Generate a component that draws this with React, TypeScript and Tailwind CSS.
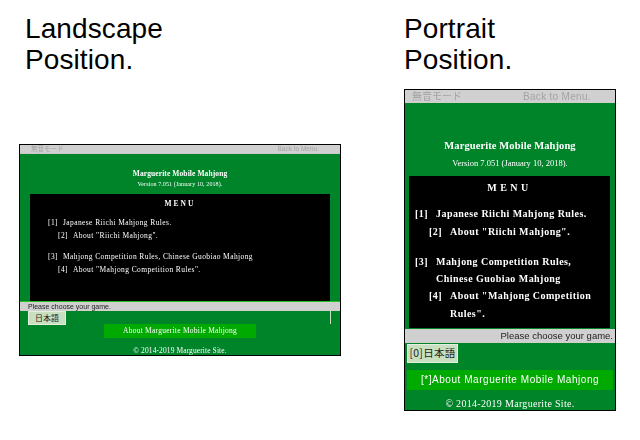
const serif = { fontFamily: '"Liberation Serif", "Noto Sans CJK JP", serif' }

function Heading({ first }: { first: string }) {
  return (
    <h2 className="text-[28px] leading-[31px] font-normal tracking-[0.1px] text-black font-['Liberation_Sans',sans-serif]">
      {first}
      <br />
      Position.
    </h2>
  )
}

function Landscape() {
  return (
    <div
      style={serif}
      className="mt-[69px] flex h-[212px] w-[322px] flex-col overflow-hidden border border-black bg-[#00842a] text-white"
    >
      <div className="flex h-[9px] items-center justify-between border-b border-dotted border-[#c9b9d9] bg-[#d0d0d0] pl-[11px] pr-[21px] text-[6.5px] leading-none text-[#a3a3a3] font-['Liberation_Sans','Noto_Sans_CJK_JP',sans-serif]">
        <span className="blur-[0.3px]">無音モード</span>
        <span className="blur-[0.3px]">Back to Menu.</span>
      </div>
      <p className="mt-[15px] text-center text-[7.5px] leading-[10px] font-bold tracking-[0.1px] blur-[0.3px]">Marguerite Mobile Mahjong</p>
      <p className="mt-px text-center text-[6px] leading-[8px] tracking-[0.1px] blur-[0.3px]">Version 7.051 (January 10, 2018).</p>
      <div className="mx-[10px] mt-[6px] h-[108px] bg-black pt-[3px] text-[7.5px] leading-[13px] tracking-[0.4px]">
        <p className="text-center font-bold tracking-[2px] blur-[0.3px]">MENU</p>
        <div className="mt-[6px] pl-[18px] blur-[0.3px]">
          <p className="flex"><span className="w-[15px]">[1]</span>Japanese Riichi Mahjong Rules.</p>
          <p className="flex pl-[10px]"><span className="w-[15px]">[2]</span>About "Riichi Mahjong".</p>
          <p className="mt-[8px] flex"><span className="w-[15px]">[3]</span>Mahjong Competition Rules, Chinese Guobiao Mahjong</p>
          <p className="flex pl-[10px]"><span className="w-[15px]">[4]</span>About "Mahjong Competition Rules".</p>
        </div>
      </div>
      <div className="h-px bg-[#22c322]" />
      <div className="flex h-[9px] items-center bg-[#d0d0d0] pl-[8px] text-[7px] leading-none text-[#222] font-['Liberation_Sans',sans-serif]">
        <span className="blur-[0.3px]">Please choose your game.</span>
      </div>
      <div className="flex h-[13px] items-start justify-between pl-[8px] pr-[9px]">
        <span className="flex h-[14px] w-[38px] items-center justify-center border border-[#e4efe0] bg-[#c8dfc0] text-[8px] leading-none text-[#222] font-['Noto_Sans_CJK_JP',sans-serif]">日本語</span>
        <span className="h-[13px] w-px bg-[#c8dfc0]" />
      </div>
      <div className="mx-[84px] flex h-[14px] items-center justify-center bg-[#00aa00] text-[7.5px] leading-none tracking-[0.25px]">
        <span className="blur-[0.3px]">About Marguerite Mobile Mahjong</span>
      </div>
      <p className="mt-[9px] text-center text-[7.5px] leading-[8px] tracking-[0.1px] blur-[0.3px]">© 2014-2019 Marguerite Site.</p>
    </div>
  )
}

function Portrait() {
  return (
    <div
      style={serif}
      className="mt-[14px] flex h-[322px] w-[212px] flex-col overflow-hidden border border-black bg-[#00842a] text-white"
    >
      <div className="flex h-[13px] items-center bg-[#d0d0d0] pl-[7px] text-[10px] leading-none text-[#a3a3a3] font-['Liberation_Sans','Noto_Sans_CJK_JP',sans-serif]">
        <span className="w-[111px] blur-[0.2px]">無音モード</span>
        <span className="tracking-[0.3px] blur-[0.2px]">Back to Menu.</span>
      </div>
      <p className="mt-[37px] text-center text-[10.5px] leading-[12px] font-bold tracking-[0.1px] blur-[0.2px]">Marguerite Mobile Mahjong</p>
      <p className="mt-[5px] text-center text-[8.5px] leading-[12px] blur-[0.2px]">Version 7.051 (January 10, 2018).</p>
      <div className="ml-[4px] mr-[5px] mt-[7px] h-[152px] bg-black pt-[3px] text-[10px] leading-[17.3px] font-bold tracking-[0.45px]">
        <p className="text-center tracking-[3.5px] blur-[0.2px]">MENU</p>
        <div className="mt-[9px] pl-[6px] blur-[0.2px]">
          <p className="flex"><span className="w-[21px] shrink-0">[1]</span>Japanese Riichi Mahjong Rules.</p>
          <p className="flex pl-[14px]"><span className="w-[21px] shrink-0">[2]</span>About "Riichi Mahjong".</p>
          <p className="mt-[13px] flex"><span className="w-[21px] shrink-0">[3]</span><span>Mahjong Competition Rules,<br />Chinese Guobiao Mahjong</span></p>
          <p className="flex pl-[14px]"><span className="w-[21px] shrink-0">[4]</span><span>About "Mahjong Competition<br />Rules".</span></p>
        </div>
      </div>
      <div className="mt-px flex h-[14px] items-center justify-end bg-[#d0d0d0] pr-[2px] text-[9.5px] leading-none text-[#222] font-['Liberation_Sans',sans-serif]">
        <span className="blur-[0.2px]">Please choose your game.</span>
      </div>
      <div className="ml-[2px] mt-px flex h-[19px] w-[51px] items-center justify-center border border-[#e4efe0] bg-[#c8dfc0] text-[10.5px] leading-none tracking-[0.3px] text-[#222] font-['Noto_Sans_CJK_JP',sans-serif]">
        [0]日本語
      </div>
      <div className="mx-[2px] mt-[7px] flex h-[20px] items-center justify-center bg-[#00aa00] text-[10px] leading-none tracking-[0.55px] font-['Liberation_Sans',sans-serif]">
        <span className="blur-[0.2px]">[*]About Marguerite Mobile Mahjong</span>
      </div>
      <p className="mt-[8px] text-center text-[10px] leading-[12px] tracking-[0.3px] blur-[0.2px]">© 2014-2019 Marguerite Site.</p>
    </div>
  )
}

export default function App() {
  return (
    <div className="flex h-[440px] w-[640px] overflow-hidden bg-white pt-[13px]">
      <div className="ml-[19px] w-[322px]">
        <div className="pl-[6px]"><Heading first="Landscape" /></div>
        <Landscape />
      </div>
      <div className="ml-[63px]">
        <Heading first="Portrait" />
        <Portrait />
      </div>
    </div>
  )
}
